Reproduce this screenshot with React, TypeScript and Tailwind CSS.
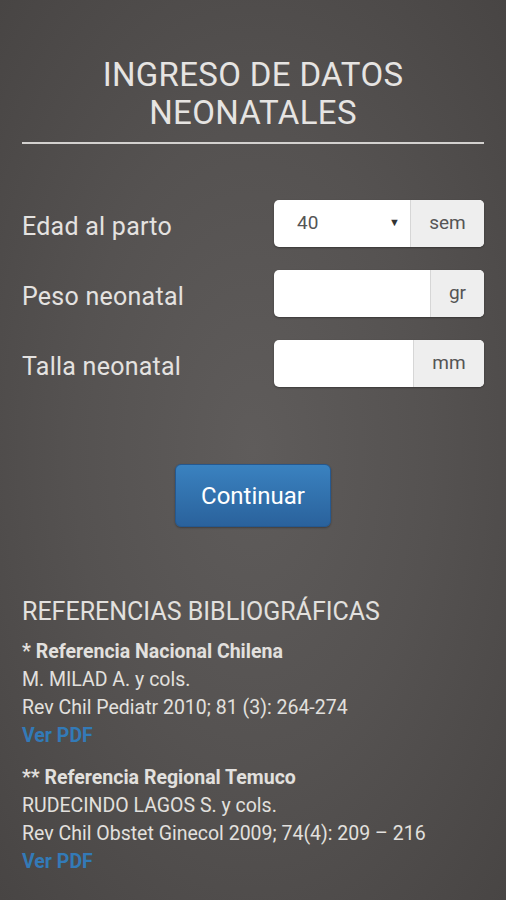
import React from "react";

const font = { fontFamily: "Roboto, 'Liberation Sans', sans-serif" };

function AddonField({ label, unit, unitW, select }: { label: string; unit: string; unitW: string; select?: string }) {
  return (
    <div className="flex items-center justify-between h-[47px]">
      <span className="pt-[5px] text-[25px] tracking-[0.01em] text-[#e4e2e0] leading-none">{label}</span>
      <div className="flex w-[210px] h-[47px] rounded-[5px] overflow-hidden bg-white shadow-[0_1px_2px_rgba(0,0,0,0.35)]">
        <div className="flex-1 flex items-center justify-between pl-[23px] pr-[10px] text-[19px] text-[#555]">
          {select && (
            <>
              <span>{select}</span>
              <span className="text-[11px] text-[#333]">▼</span>
            </>
          )}
        </div>
        <div className={`${unitW} flex items-center justify-center bg-[#eeeeee] border-l border-[#d6d6d6] text-[19px] text-[#555]`}>
          {unit}
        </div>
      </div>
    </div>
  );
}

export default function App() {
  return (
    <div
      className="w-[506px] h-[900px] overflow-hidden bg-[radial-gradient(ellipse_at_50%_50%,#5f5c5b_0%,#555251_50%,#484544_100%)] px-[22px]"
      style={font}
    >
      {/* Header */}
      <div className="pt-[56px] text-center text-[33px] tracking-[0.01em] leading-[38px] text-[#e6e4e2]">
        <div>INGRESO DE DATOS</div>
        <div>NEONATALES</div>
      </div>
      <div className="mt-[10px] h-[2px] bg-[#d3d1cf]" />

      {/* Form */}
      <div className="mt-[56px] flex flex-col gap-[23px]">
        <AddonField label="Edad al parto" unit="sem" unitW="w-[74px]" select="40" />
        <AddonField label="Peso neonatal" unit="gr" unitW="w-[54px]" />
        <AddonField label="Talla neonatal" unit="mm" unitW="w-[71px]" />
      </div>

      <div className="mt-[77px] flex justify-center">
        <button className="w-[156px] h-[63px] rounded-[6px] bg-gradient-to-b from-[#3a82c0] to-[#2a629c] border border-[#25588f] text-white text-[24px] shadow-[0_1px_2px_rgba(0,0,0,0.3)]">
          Continuar
        </button>
      </div>

      {/* References */}
      <div className="mt-[70px] text-[25px] text-[#e2e0de] leading-[30px]">REFERENCIAS BIBLIOGRÁFICAS</div>
      <div className="mt-[11px] text-[19.5px] leading-[28px] text-[#e2e0de]">
        <div className="font-bold">* Referencia Nacional Chilena</div>
        <div>M. MILAD A. y cols.</div>
        <div>Rev Chil Pediatr 2010; 81 (3): 264-274</div>
        <div className="font-bold text-[#337ab7]">Ver PDF</div>
        <div className="mt-[14px] font-bold">** Referencia Regional Temuco</div>
        <div>RUDECINDO LAGOS S. y cols.</div>
        <div>Rev Chil Obstet Ginecol 2009; 74(4): 209 – 216</div>
        <div className="font-bold text-[#337ab7]">Ver PDF</div>
      </div>
    </div>
  );
}
